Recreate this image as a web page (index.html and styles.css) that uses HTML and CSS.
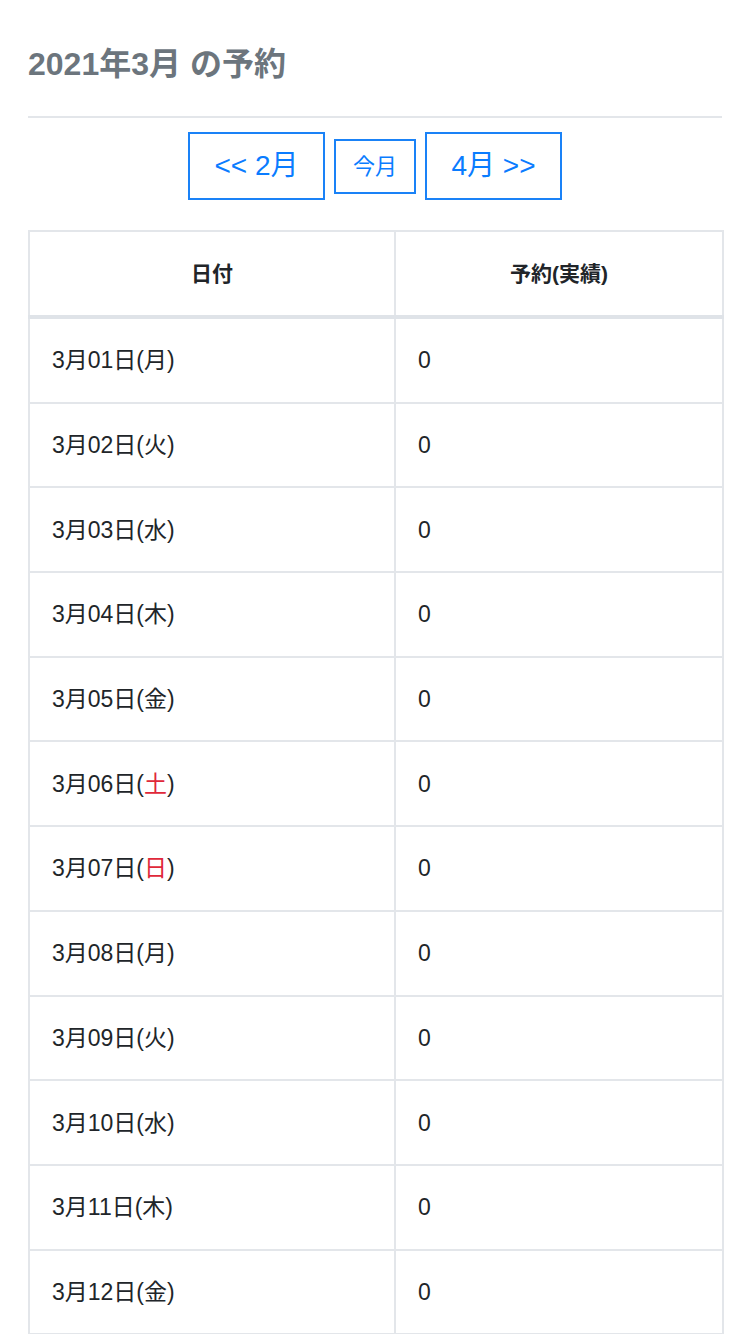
FILE: index.html
```html
<!DOCTYPE html>
<html lang="ja">
<head>
<meta charset="utf-8">
<title>2021年3月の予約</title>
<link rel="stylesheet" href="styles.css">
</head>
<body>
<div class="page">
  <h1 class="title">2021年3月 の予約</h1>
  <hr class="rule">
  <nav class="month-nav">
    <a class="btn btn-lg" href="#">&lt;&lt; 2月</a>
    <a class="btn btn-sm" href="#">今月</a>
    <a class="btn btn-lg" href="#">4月 &gt;&gt;</a>
  </nav>
  <table class="res-table">
    <colgroup>
      <col class="col-date">
      <col class="col-count">
    </colgroup>
    <thead>
      <tr><th>日付</th><th>予約(実績)</th></tr>
    </thead>
    <tbody>
      <tr><td>3月01日(月)</td><td>0</td></tr>
      <tr><td>3月02日(火)</td><td>0</td></tr>
      <tr><td>3月03日(水)</td><td>0</td></tr>
      <tr><td>3月04日(木)</td><td>0</td></tr>
      <tr><td>3月05日(金)</td><td>0</td></tr>
      <tr><td>3月06日(<span class="holiday">土</span>)</td><td>0</td></tr>
      <tr><td>3月07日(<span class="holiday">日</span>)</td><td>0</td></tr>
      <tr><td>3月08日(月)</td><td>0</td></tr>
      <tr><td>3月09日(火)</td><td>0</td></tr>
      <tr><td>3月10日(水)</td><td>0</td></tr>
      <tr><td>3月11日(木)</td><td>0</td></tr>
      <tr><td>3月12日(金)</td><td>0</td></tr>
    </tbody>
  </table>
</div>
</body>
</html>
```
FILE: styles.css
```css
html, body {
  margin: 0;
  padding: 0;
  background: #fff;
}
body {
  font-family: "Liberation Sans", "Noto Sans CJK JP", sans-serif;
  color: #212529;
  height: 1334px;
  overflow: hidden;
}
.page {
  padding: 0 28px;
}
.title {
  margin: 0;
  padding-top: 40px;
  font-size: 32px;
  line-height: 48px;
  font-weight: 700;
  color: #6c757d;
}
.rule {
  margin: 28px 0 0;
  border: 0;
  border-top: 2px solid #e3e6ea;
}
.month-nav {
  display: flex;
  justify-content: center;
  align-items: center;
  gap: 9px;
  margin-top: 14px;
}
.btn {
  display: block;
  box-sizing: border-box;
  border: 2px solid #1a82f7;
  color: #0a7cff;
  text-decoration: none;
  text-align: center;
}
.btn-lg {
  width: 137px;
  height: 68px;
  font-size: 28px;
  line-height: 64px;
}
.btn-sm {
  width: 82px;
  height: 55px;
  font-size: 22px;
  line-height: 51px;
}
.res-table {
  margin-top: 30px;
  width: 694px;
  border-collapse: collapse;
  table-layout: fixed;
  font-size: 23px;
}
.col-date { width: 366px; }
.col-count { width: 328px; }
.res-table th,
.res-table td {
  border: 2px solid #e3e6ea;
  padding: 0 0 0 22px;
  height: 82.7px;
  text-align: left;
  vertical-align: middle;
  line-height: 32px;
}
.res-table th {
  font-size: 21px;
  font-weight: 700;
  text-align: center;
  padding: 0;
  border-bottom: 4px solid #dfe3e8;
  height: 83px;
}
.holiday {
  color: #e0283a;
}
```
